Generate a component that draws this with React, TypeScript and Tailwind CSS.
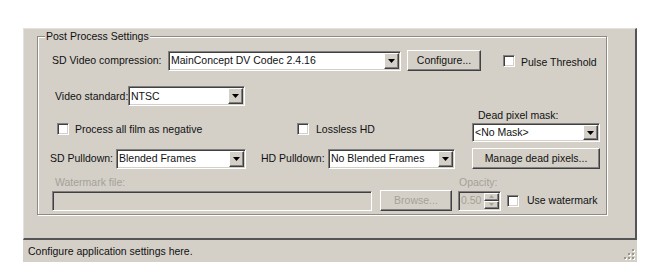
const panel = "bg-[#d4d0c8]";
const sunken =
  "border border-t-[#808080] border-l-[#808080] border-b-white border-r-white shadow-[inset_1px_1px_0_#404040,inset_-1px_-1px_0_#d4d0c8]";
const raised =
  "border border-t-white border-l-white border-b-[#404040] border-r-[#404040] shadow-[inset_-1px_-1px_0_#808080]";

function Arrow({ color = "#000" }: { color?: string }) {
  return (
    <svg width="7" height="4" viewBox="0 0 7 4">
      <path d="M0 0h7L3.5 4z" fill={color} />
    </svg>
  );
}

function Combo({ className, text }: { className: string; text: string }) {
  return (
    <div className={`flex shrink-0 bg-white p-[1px] ${sunken} ${className}`}>
      <div className="flex-1 flex items-center pl-[1px] overflow-hidden">{text}</div>
      <div className={`w-[15px] flex items-center justify-center ${panel} ${raised}`}>
        <Arrow />
      </div>
    </div>
  );
}

function Button({
  className,
  label,
  disabled,
}: {
  className: string;
  label: string;
  disabled?: boolean;
}) {
  return (
    <div
      className={`flex shrink-0 items-center justify-center ${panel} ${raised} ${
        disabled ? "text-[#a4a199]" : ""
      } ${className}`}
    >
      {label}
    </div>
  );
}

function Check() {
  return <div className={`w-[12px] h-[12px] shrink-0 bg-white ${sunken}`} />;
}

function Grip() {
  const dots = [
    [8, 0],
    [4, 4],
    [8, 4],
    [0, 8],
    [4, 8],
    [8, 8],
  ];
  return (
    <svg width="11" height="11" viewBox="0 0 11 11">
      {dots.map(([x, y], i) => (
        <g key={i}>
          <rect x={x + 1} y={y + 1} width="2" height="2" fill="#ffffff" />
          <rect x={x} y={y} width="2" height="2" fill="#9a978f" />
        </g>
      ))}
    </svg>
  );
}

export default function App() {
  return (
    <main className="w-[672px] h-[280px] bg-white pt-[28px] pl-[23px] font-['Liberation_Sans',Arial,sans-serif] text-[10.5px] leading-[13px] text-[#111] whitespace-nowrap">
      <div className={`w-[614px] ${panel}`}>
        <div className="h-[212px] border-t border-l border-t-[#e4e2dd] border-l-[#e4e2dd] border-r-2 border-b-2 border-r-[#555] border-b-[#555] pt-[7px] pl-[13px]">
          <div className="relative w-[570px] h-[179px] border border-[#8e8b84] shadow-[inset_1px_1px_0_#fff,1px_1px_0_#fff] flex flex-col">
            <div className={`absolute left-[7px] top-[-7px] px-[1px] ${panel}`}>
              Post Process Settings
            </div>

            <div className="mt-[13px] h-[21px] flex items-center pl-[14px]">
              <div className="w-[116px] shrink-0">SD Video compression:</div>
              <Combo className="w-[233px] h-[20px]" text="MainConcept DV Codec 2.4.16" />
              <Button className="ml-[6px] w-[74px] h-[21px]" label="Configure..." />
              <div className="ml-[22px]">
                <Check />
              </div>
              <div className="ml-[6px] mt-[3px]">Pulse Threshold</div>
            </div>

            <div className="mt-[15px] h-[20px] flex items-center pl-[17px]">
              <div className="w-[73px] shrink-0">Video standard:</div>
              <Combo className="w-[117px] h-[20px]" text="NTSC" />
            </div>

            <div className="mt-[2px] h-[61px] flex">
              <div className="w-[434px] shrink-0 flex flex-col">
                <div className="mt-[13px] h-[16px] flex items-center pl-[19px]">
                  <div className="w-[240px] shrink-0 flex items-center">
                    <Check />
                    <span className="ml-[6px]">Process all film as negative</span>
                  </div>
                  <Check />
                  <span className="ml-[7px]">Lossless HD</span>
                </div>
                <div className="mt-[11px] h-[21px] flex items-center pl-[12px]">
                  <div className="w-[66px] shrink-0">SD Pulldown:</div>
                  <Combo className="w-[130px] h-[20px]" text="Blended Frames" />
                  <div className="ml-[15px] w-[67px] shrink-0">HD Pulldown:</div>
                  <Combo className="w-[127px] h-[20px]" text="No Blended Frames" />
                </div>
              </div>
              <div className="w-[128px] shrink-0 flex flex-col">
                <div className="h-[15px] flex items-center pl-[6px]">Dead pixel mask:</div>
                <Combo className="h-[19px]" text="<No Mask>" />
                <Button className="mt-[6px] h-[21px]" label="Manage dead pixels..." />
              </div>
            </div>

            <div className="mt-[6px] h-[14px] flex items-center pl-[17px] text-[#a4a199]">
              <div className="w-[404px] shrink-0">Watermark file:</div>
              <div>Opacity:</div>
            </div>

            <div className="mt-[1px] h-[21px] flex items-center pl-[14px]">
              <div className={`w-[320px] h-[20px] shrink-0 ${sunken}`} />
              <Button className="ml-[8px] w-[72px] h-[21px]" label="Browse..." disabled />
              <div className={`ml-[6px] w-[43px] h-[20px] shrink-0 flex p-[1px] ${sunken}`}>
                <div className="flex-1 flex items-center pl-[1px] text-[#a4a199]">0.50</div>
                <div className="w-[15px] flex flex-col">
                  <div className={`flex-1 flex items-center justify-center ${raised}`}>
                    <svg width="5" height="3" viewBox="0 0 5 3">
                      <path d="M0 3h5L2.5 0z" fill="#a4a199" />
                    </svg>
                  </div>
                  <div className={`flex-1 flex items-center justify-center ${raised}`}>
                    <svg width="5" height="3" viewBox="0 0 5 3">
                      <path d="M0 0h5L2.5 3z" fill="#a4a199" />
                    </svg>
                  </div>
                </div>
              </div>
              <div className="ml-[6px]">
                <Check />
              </div>
              <span className="ml-[8px]">Use watermark</span>
            </div>
          </div>
        </div>

        <div className="h-[22px] flex items-center justify-between pl-[5px] pr-[2px]">
          <span>Configure application settings here.</span>
          <div className="self-end pb-[2px]">
            <Grip />
          </div>
        </div>
      </div>
    </main>
  );
}
